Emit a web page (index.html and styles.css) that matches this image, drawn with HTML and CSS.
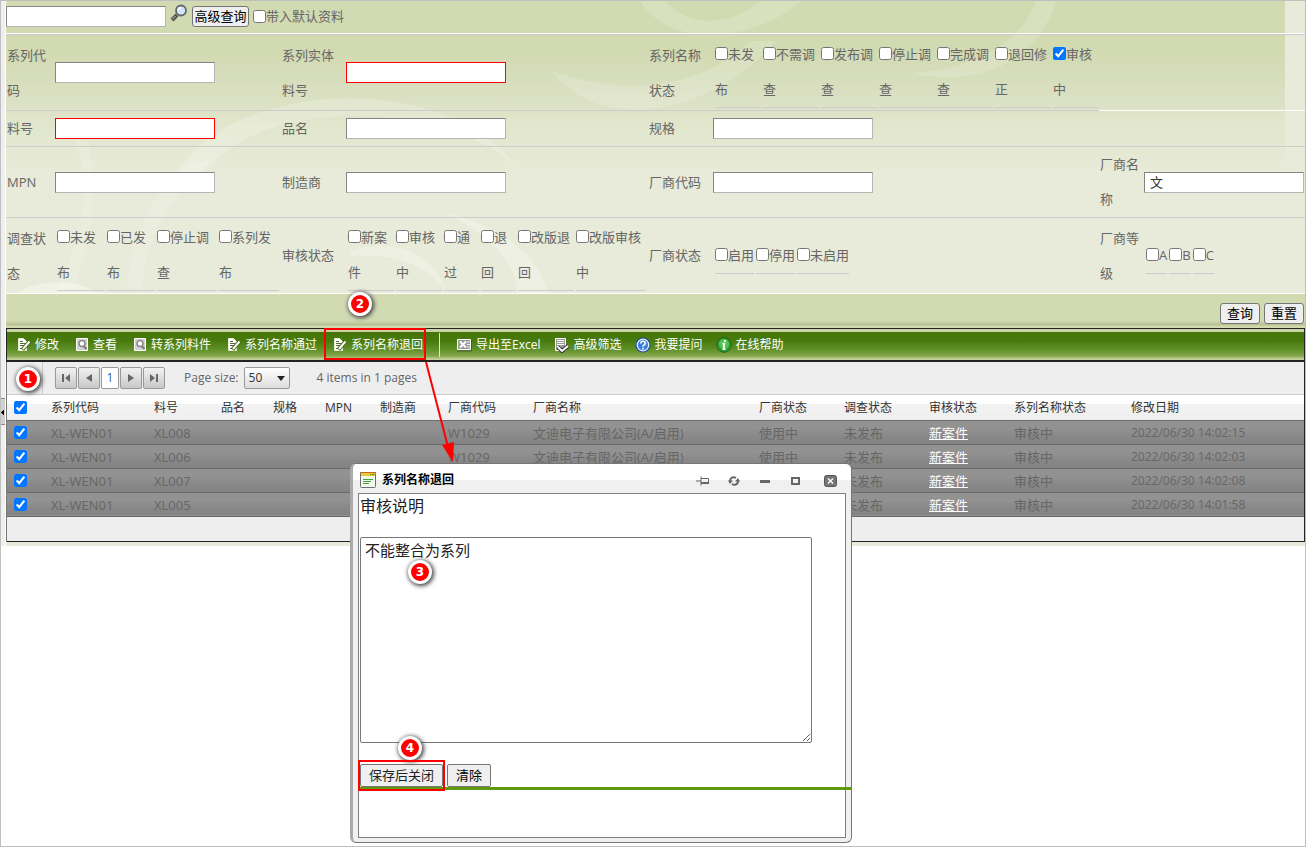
FILE: index.html
```html
<!DOCTYPE html>
<html lang="zh-CN">
<head>
<meta charset="utf-8">
<title>系列名称审核</title>
<link rel="stylesheet" href="styles.css">
</head>
<body>
<svg class="defs" width="0" height="0" aria-hidden="true">
  <symbol id="i-edit" viewBox="0 0 14 16">
    <path d="M1.500 1.500h5l3 3v9h-8z" fill="#fff" stroke="#e6ecd9"/>
    <path d="M3 4.500h3M3 6.500h5M3 8.500h4M3 11.500h2" stroke="#55693a"/>
    <path d="M5.500 12.500 12.500 4.500" stroke="#3f6312" stroke-width="4"/>
    <path d="M6 12 12.500 4.500" stroke="#fff" stroke-width="2"/>
  </symbol>
  <symbol id="i-view" viewBox="0 0 14 16">
    <path d="M1.500 1.500h11v12h-11z" fill="#d2d2d2" stroke="#fff"/>
    <circle cx="7" cy="6.500" r="3" fill="#fff" stroke="#888" stroke-width="1.500"/>
    <path d="m9 9.500 2.500 2.500" stroke="#777" stroke-width="2"/>
  </symbol>
  <symbol id="i-excel" viewBox="0 0 16 16">
    <path d="M1.500 2.500h13v10h-13z" fill="#9a9a9a" stroke="#fff"/>
    <path d="m4 4.500 6 6M10 4.500l-6 6" stroke="#fff" stroke-width="2"/>
    <path d="M11 5h3M11 7.500h3M11 10h3" stroke="#eee"/>
    <path d="M1 14h14.500V3" fill="none" stroke="#4a5a35"/>
  </symbol>
  <symbol id="i-filter" viewBox="0 0 16 16">
    <path d="M1.500 1.500h10v12h-10z" fill="#999" stroke="#fff"/>
    <path d="M3 3.500h7M3 5.500h7M3 7.500h7M3 9.500h4" stroke="#fff"/>
    <path d="m4 10 4 4 6-5" fill="none" stroke="#333" stroke-width="4"/>
    <path d="m4 10 4 4 6-5" fill="none" stroke="#fff" stroke-width="2"/>
  </symbol>
  <symbol id="i-ask" viewBox="0 0 16 16">
    <circle cx="8" cy="8" r="7.500" fill="#1d479e"/>
    <circle cx="8" cy="8" r="5.800" fill="#3d82e0" stroke="#e6efff" stroke-width="1.300"/>
    <path d="M5.800 6.500c0-3 4.500-2.800 4.500-.3C10.300 8 8 7.800 8 9.500M8 10.800v1.700" fill="none" stroke="#fff" stroke-width="1.600"/>
  </symbol>
  <symbol id="i-info" viewBox="0 0 16 16">
    <circle cx="8" cy="8" r="7.300" fill="#2f9a2f" stroke="#1f6418"/>
    <circle cx="8" cy="7" r="5" fill="#4fc44d"/>
    <path d="M9 3v2M6.300 6.700h2L7.500 12h2" fill="none" stroke="#fff" stroke-width="1.800"/>
  </symbol>
</svg>

<div class="page">
  <aside class="gutter"><button class="splitter" type="button" aria-label="折叠"></button></aside>
  <main class="main">
    <form class="search">
      <svg class="swirls" viewBox="0 0 1280 330" preserveAspectRatio="xMinYMin slice" fill="#fff" aria-hidden="true">
        <path d="M634 0C665 50 750 40 795 0H755C720 28 680 25 660 0Z" opacity=".16"/>
        <path d="M545 70C590 130 700 120 770 40L745 40C690 90 620 95 545 70Z" opacity=".16"/>
        <path d="M1050 0C1035 50 985 90 905 72C960 70 1015 45 1030 0Z" opacity=".16"/>
        <path d="M165 185C200 85 430 60 510 165C440 100 240 90 190 185Z" opacity=".2"/>
        <path d="M120 285C130 220 150 190 185 160L205 160C160 200 140 240 135 290Z" opacity=".14"/>
        <path d="M68 140Q95 200 50 290H68Q98 200 82 140Z" opacity=".14"/>
        <path d="M10 293C35 275 75 280 95 293Z" opacity=".35"/>
        <path d="M440 212C500 225 535 260 542 293H512C510 265 490 238 440 212Z" opacity=".28"/>
        <path d="M345 250C390 235 430 255 440 290C420 265 390 252 345 255Z" opacity=".25"/>
      </svg>
      <div class="topbar">
        <input class="field" type="text" aria-label="快速查询">
        <svg class="magnifier" viewBox="0 0 18 18" aria-hidden="true">
          <path d="m2 16 5-5" stroke="#555" stroke-width="4"/><path d="m2.500 15 3-3" stroke="#bbb"/>
          <circle cx="11" cy="6.500" r="5" fill="#cfe4f8" stroke="#666" stroke-width="1.800"/>
          <path d="M8.500 6c.3-1.600 1.300-2.200 2.600-2.300" fill="none" stroke="#fff" stroke-width="1.500"/>
        </svg>
        <button class="btn btn-tight" type="button">高级查询</button>
        <label class="check"><input type="checkbox">带入默认资料</label>
      </div>

      <div class="row tall first">
        <label class="name" for="f1">系列代码</label>
        <div class="cell"><input class="field" id="f1" type="text"></div>
        <label class="name" for="f2">系列实体料号</label>
        <div class="cell"><input class="field required" id="f2" type="text"></div>
        <span class="name">系列名称状态</span>
        <div class="cell opts">
          <label class="opt n2"><input type="checkbox">未发<br>布</label>
          <label class="opt n3"><input type="checkbox">不需调<br>查</label>
          <label class="opt n3"><input type="checkbox">发布调<br>查</label>
          <label class="opt n3"><input type="checkbox">停止调<br>查</label>
          <label class="opt n3"><input type="checkbox">完成调<br>查</label>
          <label class="opt n3"><input type="checkbox">退回修<br>正</label>
          <label class="opt n2"><input type="checkbox" checked>审核<br>中</label>
        </div>
        <div class="cell blank"></div>
      </div>
      <div class="row">
        <label class="name" for="f3">料号</label>
        <div class="cell"><input class="field required" id="f3" type="text"></div>
        <label class="name" for="f4">品名</label>
        <div class="cell"><input class="field" id="f4" type="text"></div>
        <label class="name" for="f5">规格</label>
        <div class="cell"><input class="field" id="f5" type="text"></div>
      </div>
      <div class="row mid">
        <label class="name" for="f6">MPN</label>
        <div class="cell"><input class="field" id="f6" type="text"></div>
        <label class="name" for="f7">制造商</label>
        <div class="cell"><input class="field" id="f7" type="text"></div>
        <label class="name" for="f8">厂商代码</label>
        <div class="cell"><input class="field" id="f8" type="text"></div>
        <label class="name" for="f9">厂商名称</label>
        <div class="cell"><input class="field" id="f9" type="text" value="文"></div>
      </div>
      <div class="row tall last">
        <span class="name">调查状态</span>
        <div class="cell opts roomy">
          <label class="opt n2"><input type="checkbox">未发<br>布</label>
          <label class="opt n2"><input type="checkbox">已发<br>布</label>
          <label class="opt n3"><input type="checkbox">停止调<br>查</label>
          <label class="opt n3"><input type="checkbox">系列发<br>布</label>
        </div>
        <span class="name">审核状态</span>
        <div class="cell opts">
          <label class="opt n2"><input type="checkbox">新案<br>件</label>
          <label class="opt n2"><input type="checkbox">审核<br>中</label>
          <label class="opt n1"><input type="checkbox">通<br>过</label>
          <label class="opt n1"><input type="checkbox">退<br>回</label>
          <label class="opt n3"><input type="checkbox">改版退<br>回</label>
          <label class="opt n4"><input type="checkbox">改版审核<br>中</label>
        </div>
        <span class="name">厂商状态</span>
        <div class="cell opts">
          <label class="opt"><input type="checkbox">启用</label>
          <label class="opt"><input type="checkbox">停用</label>
          <label class="opt"><input type="checkbox">未启用</label>
        </div>
        <span class="name">厂商等级</span>
        <div class="cell opts">
          <label class="opt"><input type="checkbox">A</label>
          <label class="opt"><input type="checkbox">B</label>
          <label class="opt"><input type="checkbox">C</label>
        </div>
      </div>
      <div class="actions">
        <button class="btn" type="button">查询</button>
        <button class="btn" type="reset">重置</button>
      </div>
    </form>

    <nav class="toolbar">
      <button type="button"><svg class="ic"><use href="#i-edit"/></svg>修改</button>
      <button type="button"><svg class="ic"><use href="#i-view"/></svg>查看</button>
      <button type="button"><svg class="ic"><use href="#i-view"/></svg>转系列料件</button>
      <button type="button"><svg class="ic"><use href="#i-edit"/></svg>系列名称通过</button>
      <button type="button" class="marked"><svg class="ic"><use href="#i-edit"/></svg>系列名称退回</button>
      <span class="sep"></span>
      <div class="tail">
        <button type="button"><svg class="ic wide"><use href="#i-excel"/></svg>导出至Excel</button>
        <button type="button"><svg class="ic wide"><use href="#i-filter"/></svg>高级筛选</button>
        <button type="button"><svg class="ic wide"><use href="#i-ask"/></svg>我要提问</button>
        <button type="button"><svg class="ic wide"><use href="#i-info"/></svg>在线帮助</button>
      </div>
    </nav>

    <section class="grid">
      <div class="pager">
        <span class="pager-head"></span>
        <div class="pages">
          <button type="button" aria-label="首页"><svg viewBox="0 0 10 10"><path d="M1 1h2v8H1zM9 1v8L4 5z"/></svg></button>
          <button type="button" aria-label="上一页"><svg viewBox="0 0 10 10"><path d="M8 1v8L2 5z"/></svg></button>
          <button type="button" class="current">1</button>
          <button type="button" aria-label="下一页"><svg viewBox="0 0 10 10"><path d="M2 1v8l6-4z"/></svg></button>
          <button type="button" aria-label="末页"><svg viewBox="0 0 10 10"><path d="M1 1v8l5-4zM7 1h2v8H7z"/></svg></button>
        </div>
        <label for="size">Page size:</label>
        <span class="size"><select id="size"><option>50</option></select></span>
        <span class="total">4 items in 1 pages</span>
      </div>
      <table>
        <colgroup><col class="c36"><col class="c103"><col class="c67"><col class="c52"><col class="c52"><col class="c55"><col class="c68"><col class="c85"><col class="c226"><col class="c85"><col class="c85"><col class="c85"><col class="c117"><col></colgroup>
        <thead><tr><th><input type="checkbox" checked aria-label="全选"></th><th>系列代码</th><th>料号</th><th>品名</th><th>规格</th><th>MPN</th><th>制造商</th><th>厂商代码</th><th>厂商名称</th><th>厂商状态</th><th>调查状态</th><th>审核状态</th><th>系列名称状态</th><th>修改日期</th></tr></thead>
        <tbody>
          <tr><td><input type="checkbox" checked aria-label="XL008"></td><td>XL-WEN01</td><td>XL008</td><td></td><td></td><td></td><td></td><td>W1029</td><td>文迪电子有限公司(A/启用)</td><td>使用中</td><td>未发布</td><td><a href="#">新案件</a></td><td>审核中</td><td class="date">2022/06/30 14:02:15</td></tr>
          <tr><td><input type="checkbox" checked aria-label="XL006"></td><td>XL-WEN01</td><td>XL006</td><td></td><td></td><td></td><td></td><td>W1029</td><td>文迪电子有限公司(A/启用)</td><td>使用中</td><td>未发布</td><td><a href="#">新案件</a></td><td>审核中</td><td class="date">2022/06/30 14:02:03</td></tr>
          <tr><td><input type="checkbox" checked aria-label="XL007"></td><td>XL-WEN01</td><td>XL007</td><td></td><td></td><td></td><td></td><td></td><td></td><td></td><td>未发布</td><td><a href="#">新案件</a></td><td>审核中</td><td class="date">2022/06/30 14:02:08</td></tr>
          <tr><td><input type="checkbox" checked aria-label="XL005"></td><td>XL-WEN01</td><td>XL005</td><td></td><td></td><td></td><td></td><td></td><td></td><td></td><td>未发布</td><td><a href="#">新案件</a></td><td>审核中</td><td class="date">2022/06/30 14:01:58</td></tr>
        </tbody>
      </table>
      <div class="foot"></div>
    </section>
  </main>

  <section class="dialog" role="dialog" aria-labelledby="dt">
    <header>
      <svg class="form-icon" viewBox="0 0 16 16" aria-hidden="true"><rect x=".5" y=".5" width="15" height="15" rx="1" fill="#f4f9ee" stroke="#6a6f78"/><path d="M1 1h14v3H1z" fill="#f0c63a"/><path d="M0 .500h16" stroke="#b8701c"/><path d="M10 2.500h1M12 2.500h2" stroke="#2c8a2c"/><path d="M3 7.500h10M3 9.500h8M3 11.500h6" stroke="#3da33d"/></svg>
      <h2 id="dt">系列名称退回</h2>
      <div class="tools">
        <button type="button" aria-label="固定"><svg viewBox="0 0 14 12"><path d="M0 6h5M5 1.500v9M5 3.500h7.500v5H5" fill="none" stroke="#666"/><path d="M5 8h8" stroke="#666" stroke-width="2"/></svg></button>
        <button type="button" aria-label="刷新"><svg viewBox="0 0 14 12"><path d="M3 6C3 3 6 1 9 3M11 6c0 3-3 5-6 3" fill="none" stroke="#666" stroke-width="2"/><path d="M1 5.500h5L3 9zM8 6.500h5L11 3z" fill="#666"/></svg></button>
        <button type="button" aria-label="最小化"><svg viewBox="0 0 14 12"><path d="M2 6.500h10" stroke="#666" stroke-width="3"/></svg></button>
        <button type="button" aria-label="最大化"><svg viewBox="0 0 14 12"><path d="M3 3h7v6H3z" fill="none" stroke="#666" stroke-width="2"/></svg></button>
        <button type="button" aria-label="关闭"><svg viewBox="0 0 14 12"><rect x=".5" y=".5" width="12" height="11" rx="2" fill="#777" stroke="#555"/><path d="m4 3.500 5 5M9 3.500l-5 5" stroke="#fff" stroke-width="1.300"/></svg></button>
      </div>
    </header>
    <div class="body">
      <label class="note-label" for="note">审核说明</label>
      <textarea id="note">不能整合为系列</textarea>
      <div class="buttons">
        <button class="btn big marked-btn" type="button">保存后关闭</button>
        <button class="btn big" type="button">清除</button>
      </div>
      <hr>
    </div>
  </section>

  <svg class="arrow" viewBox="0 0 40 110" aria-hidden="true"><path d="M6 9 28 94" stroke="#f00" stroke-width="2"/><path d="m22 92 12-3-1 20z" fill="#f00"/></svg>
  <span class="badge b1">1</span>
  <span class="badge b2">2</span>
  <span class="badge b3">3</span>
  <span class="badge b4">4</span>
</div>
</body>
</html>
```

FILE: styles.css
```css
* { box-sizing: border-box; }
body {
  margin: 0;
  font: 13px/20px "Open Sans", "Noto Sans CJK SC", sans-serif;
  color: #666;
  background: #fff;
}
button, input, select, textarea { font: inherit; }
input[type="checkbox"] { width: 13px; height: 13px; margin: 0; flex: none; }
.defs { position: absolute; }
.page {
  position: relative;
  min-height: 100vh;
  border: 1px solid #bfbfbf;
  display: flex;
  align-items: flex-start;
}
.gutter {
  width: 5px;
  height: 545px;
  padding-top: 397px;
  border-right: 1px solid #fff;
  background: #f0eff0;
}
.splitter {
  display: block;
  width: 4px;
  height: 27px;
  padding: 0;
  border: solid #888;
  border-width: 1px 0;
  background: linear-gradient(to bottom left, #000 50%, transparent 50%) 0 13px / 3px 3px no-repeat, linear-gradient(to bottom right, transparent 50%, #000 50%) 0 10px / 3px 3px no-repeat, #d0d0d0;
}
.main { flex: 1; min-width: 0; background: #e8ebd9; padding-bottom: 4px; }

/* search form */
.search {
  position: relative;
  overflow: hidden;
  background: linear-gradient(#d2dab2 50px, #d9dfc0 90px, #e1e6cd 125px, #e8ebd9 175px) 0 0 / calc(100% - 20px) 100% no-repeat, #e8ebd9;
}
.search > * { position: relative; }
.search .swirls { position: absolute; left: 0; top: 0; width: 1280px; height: 330px; }
.topbar {
  display: flex;
  align-items: center;
  height: 34px;
  padding-bottom: 3px;
  border-bottom: 1px solid #ccc;
  box-shadow: inset 0 -1px #fff;
}
.field {
  width: 160px;
  height: 21px;
  padding: 1px 5px;
  border: 1px solid;
  border-color: #858585 #b5b5b5 #b5b5b5 #858585;
  color: #333;
  background: #fff;
}
.required { border-color: #f00; }
.magnifier { width: 18px; height: 18px; margin: 0 4px 6px; }
.btn {
  height: 21px;
  padding: 0 6px;
  border: 1px solid #767676;
  border-radius: 3px;
  background: #efefef;
  color: #000;
  line-height: 19px;
}
.btn-tight { padding: 0 1px; width: 57px; white-space: nowrap; }
.check { display: flex; align-items: center; margin-left: 4px; }
.row {
  display: grid;
  grid-template-columns: 49px 226fr 65px 302fr 65px 386fr 45px 161fr;
  min-height: 36px;
  line-height: 35px;
  border-bottom: 1px solid #ccc;
}
.row.mid { min-height: 71px; }
.row.tall { min-height: 76px; }
.row.first { border-bottom: 0; }
.first > * { border-bottom: 1px solid #ccc; }
.first > .blank { grid-column: 7 / 9; border-color: #fff; }
.row.last { border-color: #fff; }
.name { align-content: center; padding-left: 1px; padding-right: 4px; }
.cell { display: flex; align-items: center; min-width: 0; }
.opts { gap: 2px; padding-left: 2px; white-space: nowrap; }
.opt { border-bottom: 1px solid #ccc; }
.opt input { vertical-align: -1px; }
.n1 { width: 35px; }
.n2 { width: 46px; }
.n3 { width: 56px; }
.n4 { width: 69px; }
.roomy .n2 { width: 48px; }
.roomy .n3 { width: 60px; }
.actions {
  display: flex;
  justify-content: flex-end;
  align-items: center;
  gap: 4px;
  height: 34px;
  padding: 5px 1px 0 0;
  background: linear-gradient(#d2dab2 27px, #b5bf8e 31px, #d2dab2 32px);
}

/* green toolbar */
.toolbar {
  display: flex;
  align-items: center;
  height: 34px;
  padding: 1px 10px 0;
  gap: 16px;
  border: 1px solid #222;
  border-bottom-width: 2px;
  background: linear-gradient(#c9d3a8 3px, #44740a 3px, #487b0d 12px, #5e8f26 20px, #83a64b 27px, #c4d09a 30px);
}
.toolbar button {
  display: flex;
  align-items: center;
  gap: 4px;
  padding: 0;
  border: 0;
  background: none;
  color: #fff;
  font-size: 12px;
  white-space: nowrap;
}
.tail { display: flex; gap: 13px; }
.ic { width: 14px; height: 16px; }
.ic.wide { width: 16px; }
.toolbar .marked { position: relative; }
.marked::after {
  content: "";
  position: absolute;
  inset: -7px -3px -5px -9px;
  border: 2px solid #f00;
}
.sep { width: 1px; height: 24px; background: #dfe6cf; }

/* result grid */
.grid { border-left: 1px solid #777; border-right: 1px solid #222; background: #eee; }
.pager { display: flex; align-items: center; height: 33px; border-bottom: 1px solid #ccc; white-space: nowrap; font-size: 12px; }
.pager-head { width: 36px; align-self: stretch; border-right: 1px solid #ccc; }
.pages { display: flex; gap: 1px; margin: 0 19px 0 12px; }
.pages button {
  width: 22px;
  height: 22px;
  padding: 0;
  border: 1px solid #999;
  border-radius: 2px;
  background: linear-gradient(#f2f2f2, #c8c8c8);
  line-height: 18px;
}
.pages svg { display: block; width: 10px; height: 10px; margin: auto; fill: #666; }
.pages .current { width: 18px; background: #fff; color: #369; }
.size { position: relative; margin: 0 27px 0 5px; }
.size select {
  display: block;
  width: 46px;
  height: 22px;
  padding: 0 4px;
  border: 1px solid #999;
  border-radius: 2px;
  background: linear-gradient(#fff, #ddd);
  color: #333;
  appearance: none;
}
.size::after {
  content: "";
  position: absolute;
  right: 5px;
  top: 9px;
  border: 4px solid transparent;
  border-top: 5px solid #222;
}
table { width: 100%; border-collapse: collapse; table-layout: fixed; }
th, td { height: 24px; padding: 1px 0 0 8px; text-align: left; font-weight: normal; line-height: 18px; white-space: nowrap; }
th:first-child, td:first-child { padding-left: 7px; }
th { height: 25px; font-size: 12px; color: #333; }
thead tr { background: linear-gradient(#fff 9px, #f3f3f3 9px, #eee); }
tbody tr { background: linear-gradient(#929292 33%, #8a8a8a 60%, #828282); border-top: 1px solid #6c6c6c; }
tbody tr:last-child { border-bottom: 1px solid #666; }
th input, td input { display: block; }
td a { color: #fff; }
.date { font-size: 12px; }
.c36 { width: 36px; } .c52 { width: 52px; } .c55 { width: 55px; } .c67 { width: 67px; } .c68 { width: 68px; }
.c85 { width: 85px; } .c103 { width: 103px; } .c117 { width: 117px; } .c226 { width: 226px; }
.foot { height: 25px; border-bottom: 1px solid #222; }

/* pop-up window over the grid */
.dialog {
  position: absolute;
  left: 349px;
  top: 462px;
  width: 502px;
  padding: 0 5px 4px;
  border: 1px solid #777;
  border-left: 3px solid #aaa;
  border-radius: 6px;
  background: linear-gradient(#fff 16px, #f0f0f0 16px);
}
.dialog header { display: flex; align-items: center; height: 29px; padding: 2px 8px 0 2px; }
.form-icon { width: 16px; height: 16px; }
.dialog h2 { flex: 1; margin: 0 0 0 6px; font-size: 12px; color: #000; }
.tools { display: flex; gap: 17px; padding-top: 2px; }
.tools button { width: 14px; height: 12px; padding: 0; border: 0; background: none; }
.tools button:last-child { margin-left: 4px; }
.tools svg { display: block; width: 14px; height: 12px; }
.body { height: 345px; padding: 0 1px; border: 1px solid #7b7f86; background: #fff; color: #000; }
.note-label { display: block; margin-bottom: 18px; font-size: 16px; line-height: 25px; color: #222; }
.body textarea {
  display: block;
  width: 452px;
  height: 206px;
  padding: 1px 4px;
  border: 1px solid #767676;
  border-radius: 2px;
  font-size: 15px;
  line-height: 22px;
  color: #222;
}
.buttons { display: flex; gap: 4px; margin-top: 21px; }
.btn.big { height: 23px; padding: 0 8px; border-radius: 2px; }
.marked-btn { position: relative; width: 83px; color: #222; white-space: nowrap; }
.btn.marked-btn { padding: 0; }
.marked-btn::after { content: ""; position: absolute; z-index: 1; inset: -5px -3px; border: 2px solid #f00; }
.body hr { height: 3px; margin: 0 -7px 0 -1px; border: 0; background: #5f9a0a; }

/* numbered callouts */
.badge {
  position: absolute;
  width: 24px;
  height: 24px;
  border: 3px solid #fff;
  border-radius: 50%;
  background: #f00;
  box-shadow: 1px 1px 4px 1px #444;
  color: #fff;
  font: bold 12px/18px "DejaVu Sans", sans-serif;
  text-align: center;
}
.b1 { left: 15px; top: 366px; }
.b2 { left: 347px; top: 291px; }
.b3 { left: 407px; top: 559px; }
.b4 { left: 397px; top: 735px; }
.arrow { position: absolute; left: 419px; top: 352px; width: 40px; height: 110px; }
```
